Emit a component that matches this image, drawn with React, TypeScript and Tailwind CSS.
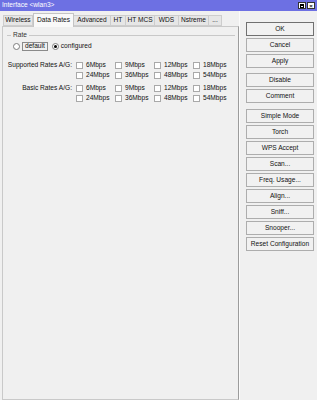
import React from "react";

const tabs = [
  { label: "Wireless", w: "w-[30px]" },
  { label: "Data Rates", w: "w-[41px]", active: true },
  { label: "Advanced", w: "w-[38px]" },
  { label: "HT", w: "w-[16px]" },
  { label: "HT MCS", w: "w-[30px]" },
  { label: "WDS", w: "w-[25px]" },
  { label: "Nstreme", w: "w-[31px]" },
  { label: "...", w: "w-[14px]" },
];

const rates = [
  ["6Mbps", "9Mbps", "12Mbps", "18Mbps"],
  ["24Mbps", "36Mbps", "48Mbps", "54Mbps"],
];

// button groups; each group after the first gets its own top margin
const groups = [
  { gap: "mt-0", items: ["OK", "Cancel", "Apply"] },
  { gap: "mt-[5px]", items: ["Disable", "Comment"] },
  {
    gap: "mt-[6px]",
    items: [
      "Simple Mode",
      "Torch",
      "WPS Accept",
      "Scan...",
      "Freq. Usage...",
      "Align...",
      "Sniff...",
      "Snooper...",
      "Reset Configuration",
    ],
  },
];

function Check() {
  return <span className="w-[7px] h-[7px] bg-white border border-[#a9a9a9] shrink-0" />;
}

function RateRows({ label }: { label: string }) {
  return (
    <div className="flex flex-col">
      {rates.map((row, i) => (
        <div key={i} className="flex items-center h-[10px]">
          <div className="w-[69px] text-right pr-[1px]">{i === 0 ? label : ""}</div>
          <div className="flex ml-[3px]">
            {row.map((r) => (
              <div key={r} className="w-[39px] flex items-center gap-[3px]">
                <Check />
                <span>{r}</span>
              </div>
            ))}
          </div>
        </div>
      ))}
    </div>
  );
}

function Radio({ on }: { on?: boolean }) {
  return (
    <span className="w-[7px] h-[7px] rounded-full bg-white border border-[#7d7d7d] flex items-center justify-center shrink-0">
      {on ? <span className="w-[3px] h-[3px] rounded-full bg-black" /> : null}
    </span>
  );
}

export default function App() {
  return (
    <div
      className="w-[317px] h-[400px] overflow-hidden bg-[#f0f0f0] text-[#111] text-[6.6px] leading-none"
      style={{ fontFamily: '"Liberation Sans", Arial, sans-serif' }}
    >
      {/* title bar */}
      <div className="h-[11px] bg-[#6d70e3] flex items-center justify-between pl-[2px] pr-[2px]">
        <span className="text-white">Interface &lt;wlan3&gt;</span>
        <div className="flex gap-[1px]">
          <span className="w-[8px] h-[7px] bg-white border border-[#333] flex items-center justify-center">
            <span className="w-[4px] h-[4px] border border-black border-t-2" />
          </span>
          <span className="w-[8px] h-[7px] bg-white border border-[#333] flex items-center justify-center text-[6px] font-bold">
            ×
          </span>
        </div>
      </div>

      <div className="flex h-[389px]">
        {/* left: tabs + content */}
        <div className="w-[239px] flex flex-col pl-[2px]">
          <div className="flex items-end h-[15px] pl-[1px]">
            {tabs.map((t) =>
              t.active ? (
                <div
                  key={t.label}
                  className={`${t.w} h-[14px] -mb-[1px] bg-[#f9f9f9] border border-b-0 border-[#c4c4c4] flex items-center justify-center relative z-10`}
                >
                  {t.label}
                </div>
              ) : (
                <div
                  key={t.label}
                  className={`${t.w} h-[11px] bg-[#e6e6e6] border border-[#cdcdcd] -ml-[1px] first:ml-0 flex items-center justify-center`}
                >
                  {t.label}
                </div>
              )
            )}
          </div>
          <div className="flex-1 border border-[#c9c9c9] border-r-[#9c9c9c] bg-[#f0f0f0] pt-[4px] pl-[1px]">
            {/* Rate group */}
            <div className="flex items-center h-[9px] pl-[3px] pr-[3px]">
              <div className="w-[4px] h-px bg-[#c8c8c8]" />
              <span className="mx-[2px] text-[#333]">Rate</span>
              <div className="flex-1 h-px bg-[#c8c8c8]" />
            </div>
            <div className="flex items-center h-[9px] mt-[2px] pl-[9px]">
              <Radio />
              <span className="ml-[2px] border border-[#8a8a8a] px-[2px] h-[9px] flex items-center">default</span>
              <span className="ml-[4px]">
                <Radio on />
              </span>
              <span className="ml-[2px]">configured</span>
            </div>

            <div className="mt-[9px]">
              <RateRows label="Supported Rates A/G:" />
            </div>
            <div className="mt-[3px]">
              <RateRows label="Basic Rates A/G:" />
            </div>
          </div>
        </div>

        {/* right: buttons */}
        <div className="flex-1 pl-[6px] pr-[3px] pt-[11px] flex flex-col border-l border-[#fbfbfb]">
          {groups.map((g, gi) => (
            <div key={gi} className={`flex flex-col gap-[2px] ${g.gap}`}>
              {g.items.map((b) => (
                <div
                  key={b}
                  className={`h-[14px] flex items-center justify-center bg-[#f1f1f1] border ${
                    b === "OK" ? "border-[#707070]" : "border-[#adadad]"
                  }`}
                >
                  {b}
                </div>
              ))}
            </div>
          ))}
        </div>
      </div>
    </div>
  );
}
